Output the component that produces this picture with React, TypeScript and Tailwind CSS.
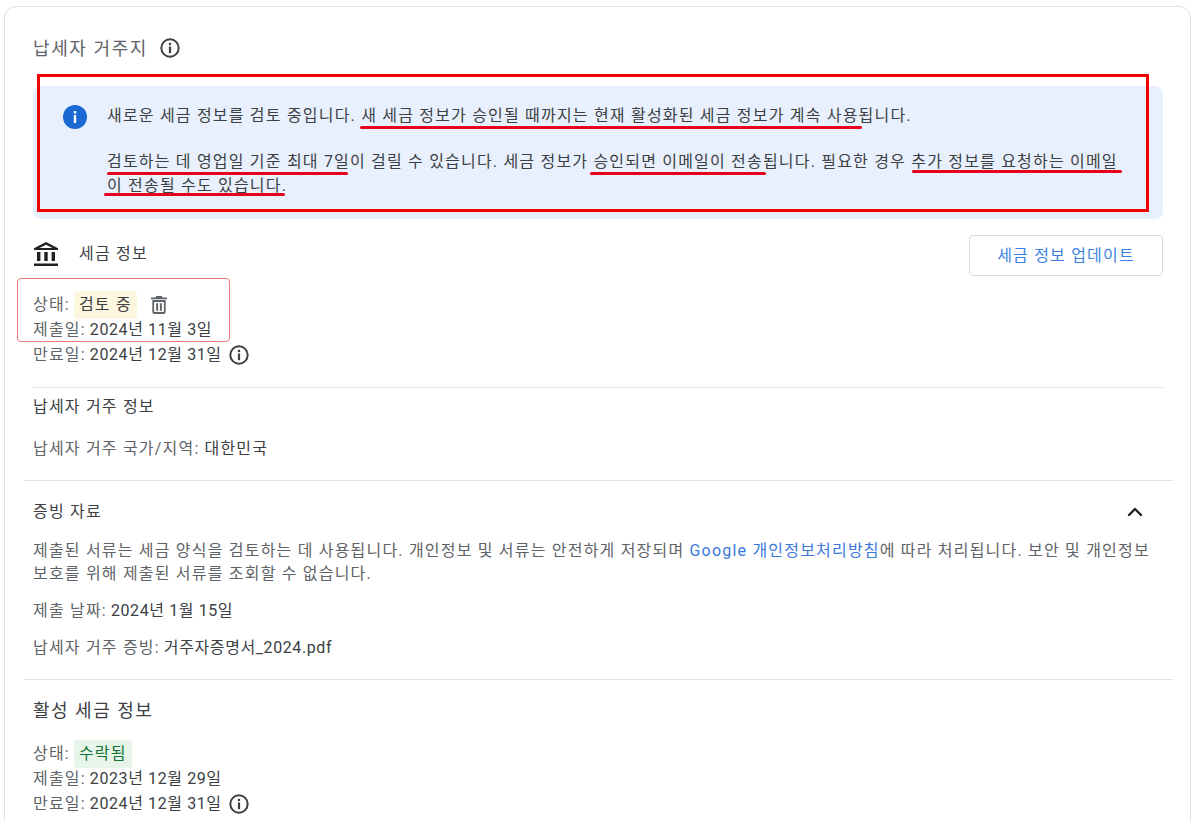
import { ChevronUp } from "lucide-react";

const FONT = "font-['Roboto','Noto_Sans_CJK_KR',sans-serif]";

function InfoOutline() {
  return (
    <svg viewBox="0 0 20 20" className="h-[20px] w-[20px]">
      <circle cx="10" cy="10" r="8.700" fill="none" stroke="#3c4043" strokeWidth="2" />
      <rect x="8.900" y="4.800" width="2.200" height="2.300" fill="#3c4043" />
      <rect x="8.900" y="8.500" width="2.200" height="6.700" fill="#3c4043" />
    </svg>
  );
}

function Bank() {
  return (
    <svg viewBox="0 0 24 24" className="h-[24px] w-[24px] fill-[#202124]">
      <path fillRule="evenodd" d="M12 0 0 6.200V8h24V6.200L12 0zm0 2.700L18.500 6h-13L12 2.700z" />
      <rect x="3" y="10" width="3.400" height="9" />
      <rect x="10.300" y="10" width="3.400" height="9" />
      <rect x="17.600" y="10" width="3.400" height="9" />
      <rect x="0" y="21.500" width="24" height="2.500" />
    </svg>
  );
}

function TrashIcon() {
  return (
    <svg viewBox="0 0 18 20" className="h-[18px] w-[16px] fill-[#5f6368]">
      <path d="M6 0h6l1 1.500h5v2H0v-2h5L6 0z" />
      <path fillRule="evenodd" d="M1.500 4.500h15V18a2 2 0 0 1-2 2h-11a2 2 0 0 1-2-2V4.500zm2 2V18h11V6.500h-11z" />
      <rect x="5.800" y="8" width="2.200" height="8.500" />
      <rect x="10" y="8" width="2.200" height="8.500" />
    </svg>
  );
}

function Row({ label, value, info }: { label: string; value: string; info?: boolean }) {
  return (
    <div className="flex h-[25px] items-center">
      <span className="text-[#5f6368]">{label}</span>
      <span className="ml-1 tracking-[0.6px] text-[#3c4043]">{value}</span>
      {info && (
        <span className="ml-[7px]">
          <InfoOutline />
        </span>
      )}
    </div>
  );
}

// red marker lines drawn on top of the screenshot
const UNDERLINES = [
  { left: 360, top: 126, width: 502 },
  { left: 107, top: 172, width: 241 },
  { left: 590, top: 172, width: 176 },
  { left: 912, top: 170, width: 210 },
  { left: 104, top: 193, width: 181 },
];

export default function App() {
  return (
    <div className={`${FONT} relative h-[821px] w-[1200px] overflow-hidden bg-white pt-[6px] pl-[4px] text-[16px] tracking-[1.2px]`}>
      <div className="h-[900px] w-[1187px] rounded-t-xl border border-[#e0e0e0] pt-[26px]">
        <div className="px-[28px]">
          <div className="flex h-[30px] items-center gap-[12px]">
            <span className="text-[18px] tracking-[1.6px] text-[#5f6368]">납세자 거주지</span>
            <InfoOutline />
          </div>

          {/* notice */}
          <div className="mt-[23px] flex h-[133px] w-[1130px] rounded-lg bg-[#e8f0fe] pt-[18px] pl-[30px] text-[#3c4043]">
            <svg viewBox="0 0 24 24" className="mt-px h-[24px] w-[24px] shrink-0 fill-[#1a68d2]">
              <circle cx="12" cy="12" r="12" />
              <path fill="#fff" d="M10.800 6h2.400v2.400h-2.400zm0 4h2.400v8h-2.400z" />
            </svg>
            <div className="ml-[20px] w-[1020px] leading-[24px]">
              <p>새로운 세금 정보를 검토 중입니다. 새 세금 정보가 승인될 때까지는 현재 활성화된 세금 정보가 계속 사용됩니다.</p>
              <p className="mt-[22px]">
                검토하는 데 영업일 기준 최대 7일이 걸릴 수 있습니다. 세금 정보가 승인되면 이메일이 전송됩니다. 필요한 경우 추가 정보를 요청하는 이메일이 전송될 수도 있습니다.
              </p>
            </div>
          </div>

          {/* tax info */}
          <div className="mt-[16px] flex h-[41px] w-[1130px] items-center justify-between">
            <div className="mb-[4px] flex items-center gap-[21px] pl-px">
              <Bank />
              <span className="text-[#3c4043]">세금 정보</span>
            </div>
            <button className="h-[41px] w-[194px] rounded border border-[#dadce0] bg-white text-[#3b82e0]">세금 정보 업데이트</button>
          </div>

          <div className="mt-[16px]">
            <div className="flex h-[25px] items-center">
              <span className="text-[#5f6368]">상태:</span>
              <span className="ml-1 rounded bg-[#fef7e0] px-[5px] leading-[28px] text-[#3c4043]">검토 중</span>
              <span className="ml-[14px]">
                <TrashIcon />
              </span>
            </div>
            <Row label="제출일:" value="2024년 11월 3일" />
            <Row label="만료일:" value="2024년 12월 31일" info />
          </div>

          <div className="mt-[20px] w-[1130px] border-t border-[#e0e0e0] pt-[7px]">
            <div className="leading-[24px] text-[#3c4043]">납세자 거주 정보</div>
            <div className="mt-[18px] leading-[24px]">
              <span className="text-[#5f6368]">납세자 거주 국가/지역:</span>
              <span className="ml-[5px] text-[#3c4043]">대한민국</span>
            </div>
          </div>
        </div>

        {/* documents */}
        <div className="mx-[19px] mt-[19px] w-[1149px] border-t border-[#e0e0e0] px-[9px] pt-[19px]">
          <div className="flex items-center justify-between pr-[2px] leading-[24px]">
            <span className="text-[#3c4043]">증빙 자료</span>
            <ChevronUp className="mr-[15px] h-[24px] w-[24px] text-[#202124]" strokeWidth={2.4} />
          </div>
          <p className="mt-[15px] w-[1125px] leading-[23px] text-[#5f6368]">
            제출된 서류는 세금 양식을 검토하는 데 사용됩니다. 개인정보 및 서류는 안전하게 저장되며 <span className="text-[#3b78d8]">Google 개인정보처리방침</span>에 따라 처리됩니다. 보안 및 개인정보 보호를 위해 제출된 서류를 조회할 수 없습니다.
          </p>
          <div className="mt-[14px] leading-[24px]">
            <span className="text-[#5f6368]">제출 날짜:</span>
            <span className="ml-1 tracking-[0.6px] text-[#3c4043]">2024년 1월 15일</span>
          </div>
          <div className="mt-[13px] leading-[24px]">
            <span className="text-[#5f6368]">납세자 거주 증빙:</span>
            <span className="ml-1 tracking-[0.6px] text-[#3c4043]">거주자증명서_2024.pdf</span>
          </div>
        </div>

        {/* active tax info */}
        <div className="mx-[19px] mt-[19px] w-[1149px] border-t border-[#e0e0e0] px-[9px] pt-[19px]">
          <div className="text-[18px] leading-[24px] tracking-[1.5px] text-[#3c4043]">활성 세금 정보</div>
          <div className="mt-[18px]">
            <div className="flex h-[25px] items-center">
              <span className="text-[#5f6368]">상태:</span>
              <span className="ml-1 rounded bg-[#e6f4ea] px-[5px] leading-[28px] text-[#137333]">수락됨</span>
            </div>
            <Row label="제출일:" value="2023년 12월 29일" />
            <Row label="만료일:" value="2024년 12월 31일" info />
          </div>
        </div>
      </div>

      {/* annotations over the screenshot */}
      <div className="absolute top-[74px] left-[37px] h-[138px] w-[1112px] border-[3px] border-[#f00000]" />
      <div className="absolute top-[278px] left-[17px] h-[64px] w-[213px] rounded-sm border border-[#f07878]" />
      {UNDERLINES.map((u) => (
        <div
          key={`${u.left}-${u.top}`}
          className="absolute h-[3px] rounded-full bg-[#e8001c]"
          style={{ left: u.left, top: u.top, width: u.width }}
        />
      ))}
    </div>
  );
}
